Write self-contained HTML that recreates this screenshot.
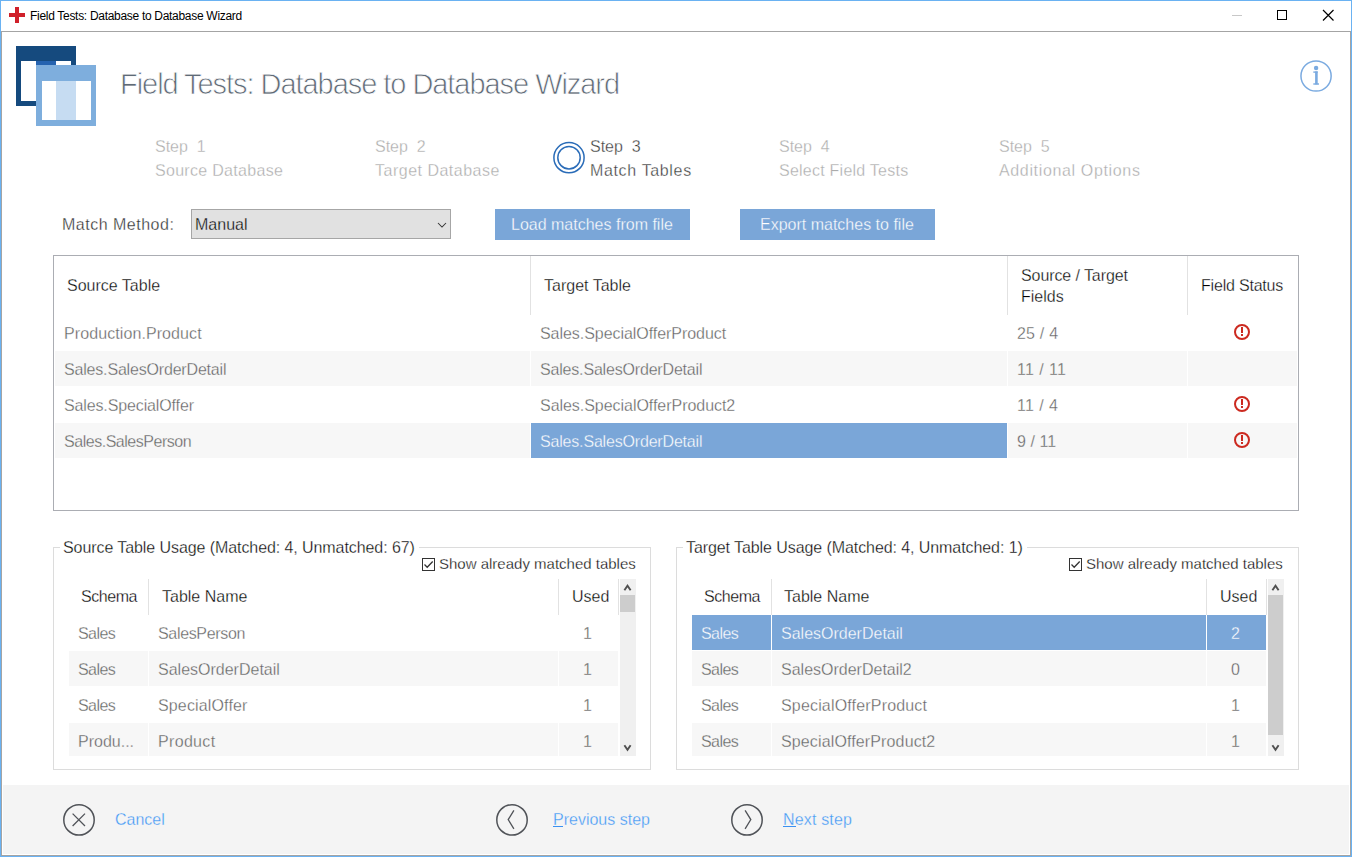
<!DOCTYPE html>
<html><head><meta charset="utf-8">
<style>
*{box-sizing:border-box;margin:0;padding:0}
html,body{width:1352px;height:857px;overflow:hidden;background:#fff;font-family:"Liberation Sans",sans-serif}
.a{position:absolute;white-space:nowrap}
.t16{font-size:16px;line-height:16px;-webkit-text-stroke:0.3px var(--sb,#fff)}
#frame{position:absolute;left:0;top:0;width:1352px;height:857px;border:1px solid #6ab2f2}
.ln{position:absolute;background:#a4a4a4}
#footer{position:absolute;left:3px;top:785px;width:1346px;height:69px;background:#f4f4f4}
.step{color:#ababab}
.hdr{color:#000}
.cell{color:#606060}
.alt{position:absolute;background:#f7f7f7}
.sel{position:absolute;background:#7aa6d8}
.vdiv{position:absolute;width:1px;background:#e2e2e2}
.link{color:#3d96f4;--sb:#f4f4f4}
</style></head><body>
<div id="frame"></div>
<div class="ln" style="left:1px;top:31px;width:1350px;height:1px"></div>
<div class="ln" style="left:1px;top:31px;width:1px;height:825px"></div>
<div class="ln" style="left:1350px;top:31px;width:1px;height:825px"></div>
<div class="ln" style="left:1px;top:855px;width:1350px;height:1px"></div>
<svg class="a" style="left:9px;top:7px" width="16" height="16"><rect x="6" y="0" width="4" height="16" fill="#d0202a"/><rect x="0" y="6" width="16" height="4" fill="#d0202a"/></svg>
<div class="a" style="left:30px;top:10px;font-size:12px;line-height:12px;letter-spacing:-0.3px;color:#000">Field Tests: Database to Database Wizard</div>
<div class="a" style="left:1232px;top:15px;width:10px;height:1px;background:#c8c8c8"></div>
<div class="a" style="left:1277px;top:10px;width:10px;height:10px;border:1px solid #000"></div>
<svg class="a" style="left:1322px;top:9px" width="13" height="13"><path d="M1 1L11.5 11.5M11.5 1L1 11.5" stroke="#000" stroke-width="1.2"/></svg>
<svg class="a" style="left:16px;top:46px" width="81" height="81">
 <rect x="0" y="0" width="60" height="60" fill="#154a7e"/>
 <rect x="5" y="15" width="50" height="40" fill="#fff"/>
 <rect x="20" y="15" width="20" height="5" fill="#2563b0"/>
 <rect x="20" y="19" width="60" height="61" fill="#7eaedd"/>
 <rect x="26" y="35" width="49" height="39" fill="#fff"/>
 <rect x="40" y="35" width="20" height="39" fill="#c6dcf2"/>
</svg>
<div class="a" style="left:120px;top:70px;font-size:29px;line-height:29px;letter-spacing:-1.05px;color:#5f6a76;-webkit-text-stroke:0.75px #fff">Field Tests: Database to Database Wizard</div>
<svg class="a" style="left:1296px;top:56px" width="40" height="40"><g fill="#7aaae0"><circle cx="20.05" cy="20" r="15.1" fill="none" stroke="#7aaae0" stroke-width="1.5"/><circle cx="20.1" cy="12" r="2.2"/><rect x="19.1" y="15.4" width="2.6" height="13"/><rect x="17.3" y="15.4" width="4.4" height="1.4"/><rect x="17.3" y="27.3" width="5.7" height="1.4"/></g></svg>
<div class="a t16 step" style="left:155px;top:139px;">Step&nbsp; 1</div>
<div class="a t16 step" style="left:155px;top:163px;letter-spacing:0.3px">Source Database</div>
<div class="a t16 step" style="left:375px;top:139px;">Step&nbsp; 2</div>
<div class="a t16 step" style="left:375px;top:163px;letter-spacing:0.5px">Target Database</div>
<div class="a t16" style="left:590px;top:139px;color:#3a3a3a;">Step&nbsp; 3</div>
<div class="a t16" style="left:590px;top:163px;color:#3a3a3a;letter-spacing:0.65px">Match Tables</div>
<div class="a t16 step" style="left:779px;top:139px;">Step&nbsp; 4</div>
<div class="a t16 step" style="left:779px;top:163px;letter-spacing:0.24px">Select Field Tests</div>
<div class="a t16 step" style="left:999px;top:139px;">Step&nbsp; 5</div>
<div class="a t16 step" style="left:999px;top:163px;letter-spacing:0.65px">Additional Options</div>
<svg class="a" style="left:551px;top:140px" width="36" height="36"><circle cx="18" cy="17.7" r="15.1" fill="none" stroke="#2a6cb8" stroke-width="1.5"/><circle cx="18" cy="17.7" r="11.2" fill="none" stroke="#2a6cb8" stroke-width="1.5"/></svg>
<div class="a t16" style="left:62px;top:217px;color:#2a2a2a;letter-spacing:0.5px">Match Method:</div>
<div class="a" style="left:191px;top:209px;width:260px;height:30px;background:#e1e1e1;border:1px solid #a6a6a6"></div>
<div class="a t16" style="left:195px;top:217px;color:#000;--sb:#e1e1e1">Manual</div>
<svg class="a" style="left:437px;top:222px" width="10" height="7"><path d="M1 1L5 5L9 1" fill="none" stroke="#333" stroke-width="1.05"/></svg>
<div class="a" style="left:495px;top:209px;width:195px;height:31px;background:#7aa6d8"></div>
<div class="a t16" style="left:511px;top:217px;color:#fff;--sb:#7aa6d8">Load matches from file</div>
<div class="a" style="left:740px;top:209px;width:195px;height:31px;background:#7aa6d8"></div>
<div class="a t16" style="left:760px;top:217px;color:#fff;--sb:#7aa6d8">Export matches to file</div>
<div class="a" style="left:53px;top:255px;width:1246px;height:256px;border:1px solid #abadb3"></div>
<div class="vdiv" style="left:530px;top:256px;height:59px"></div>
<div class="vdiv" style="left:1007px;top:256px;height:59px"></div>
<div class="vdiv" style="left:1187px;top:256px;height:59px"></div>
<div class="a t16 hdr" style="left:67px;top:278px">Source Table</div>
<div class="a t16 hdr" style="left:544px;top:278px">Target Table</div>
<div class="a t16 hdr" style="left:1021px;top:268px;letter-spacing:-0.09px">Source / Target</div>
<div class="a t16 hdr" style="left:1021px;top:289px">Fields</div>
<div class="a t16 hdr" style="left:1201px;top:278px;letter-spacing:-0.2px">Field Status</div>
<div class="a t16 cell" style="left:64px;top:326px;letter-spacing:0.09px;">Production.Product</div>
<div class="a t16 cell" style="left:540px;top:326px;letter-spacing:-0.05px;">Sales.SpecialOfferProduct</div>
<div class="a t16 cell" style="left:1017px;top:326px;letter-spacing:0.2px;">25 / 4</div>
<svg class="a" style="left:1232px;top:322px" width="20" height="20"><circle cx="10" cy="10" r="7" fill="none" stroke="#cc2a20" stroke-width="2"/><rect x="9" y="5" width="2" height="6" fill="#cc2a20"/><rect x="9" y="12" width="2" height="2" fill="#cc2a20"/></svg>
<div class="alt" style="left:55px;top:351px;width:475px;height:35px"></div>
<div class="alt" style="left:531px;top:351px;width:476px;height:35px"></div>
<div class="alt" style="left:1008px;top:351px;width:179px;height:35px"></div>
<div class="alt" style="left:1188px;top:351px;width:109px;height:35px"></div>
<div class="a t16 cell" style="left:64px;top:362px;--sb:#f7f7f7;letter-spacing:-0.18px;">Sales.SalesOrderDetail</div>
<div class="a t16 cell" style="left:540px;top:362px;--sb:#f7f7f7;letter-spacing:-0.18px;">Sales.SalesOrderDetail</div>
<div class="a t16 cell" style="left:1017px;top:362px;--sb:#f7f7f7;letter-spacing:0.4px;">11 / 11</div>
<div class="a t16 cell" style="left:64px;top:398px;letter-spacing:-0.13px;">Sales.SpecialOffer</div>
<div class="a t16 cell" style="left:540px;top:398px;letter-spacing:-0.04px;">Sales.SpecialOfferProduct2</div>
<div class="a t16 cell" style="left:1017px;top:398px;letter-spacing:0.4px;">11 / 4</div>
<svg class="a" style="left:1232px;top:394px" width="20" height="20"><circle cx="10" cy="10" r="7" fill="none" stroke="#cc2a20" stroke-width="2"/><rect x="9" y="5" width="2" height="6" fill="#cc2a20"/><rect x="9" y="12" width="2" height="2" fill="#cc2a20"/></svg>
<div class="alt" style="left:55px;top:423px;width:475px;height:35px"></div>
<div class="sel" style="left:531px;top:423px;width:476px;height:35px"></div>
<div class="alt" style="left:1008px;top:423px;width:179px;height:35px"></div>
<div class="alt" style="left:1188px;top:423px;width:109px;height:35px"></div>
<div class="a t16 cell" style="left:64px;top:434px;--sb:#f7f7f7;letter-spacing:-0.47px;">Sales.SalesPerson</div>
<div class="a t16" style="left:540px;top:434px;color:#fff;--sb:#7aa6d8;letter-spacing:-0.18px;">Sales.SalesOrderDetail</div>
<div class="a t16 cell" style="left:1017px;top:434px;--sb:#f7f7f7;letter-spacing:0.05px;">9 / 11</div>
<svg class="a" style="left:1232px;top:430px" width="20" height="20"><circle cx="10" cy="10" r="7" fill="none" stroke="#cc2a20" stroke-width="2"/><rect x="9" y="5" width="2" height="6" fill="#cc2a20"/><rect x="9" y="12" width="2" height="2" fill="#cc2a20"/></svg>
<div class="a" style="left:53px;top:547px;width:598px;height:223px;border:1px solid #dcdcdc"></div>
<div class="a t16" style="left:60px;top:540px;height:16px;padding:0 4px 0 3px;background:#fff;color:#000;letter-spacing:-0.08px">Source Table Usage (Matched: 4, Unmatched: 67)</div>
<svg class="a" style="left:422px;top:558px" width="13" height="13"><rect x="0.5" y="0.5" width="12" height="12" fill="#fff" stroke="#333"/><path d="M2.5 6.5L5.2 9.2L10.7 3.5" fill="none" stroke="#333" stroke-width="1.3"/></svg>
<div class="a" style="left:439px;top:556px;font-size:15px;line-height:15px;color:#000;-webkit-text-stroke:0.3px #fff">Show already matched tables</div>
<div class="vdiv" style="left:148px;top:579px;height:36px"></div>
<div class="vdiv" style="left:558px;top:579px;height:36px"></div>
<div class="vdiv" style="left:618px;top:579px;height:36px"></div>
<div class="a t16 hdr" style="left:81px;top:589px;letter-spacing:-0.45px">Schema</div>
<div class="a t16 hdr" style="left:162px;top:589px">Table Name</div>
<div class="a t16 hdr" style="left:572px;top:589px">Used</div>
<div class="a t16" style="left:78px;top:626px;color:#606060;letter-spacing:-0.55px;">Sales</div>
<div class="a t16" style="left:158px;top:626px;color:#606060;letter-spacing:-0.33px;">SalesPerson</div>
<div class="a t16" style="left:559px;width:59px;text-align:center;top:626px;color:#606060;padding-right:2px">1</div>
<div class="alt" style="left:69px;top:651px;width:79px;height:35px"></div>
<div class="alt" style="left:149px;top:651px;width:409px;height:35px"></div>
<div class="alt" style="left:559px;top:651px;width:59px;height:35px"></div>
<div class="a t16" style="left:78px;top:662px;color:#606060;--sb:#f7f7f7;letter-spacing:-0.55px;">Sales</div>
<div class="a t16" style="left:158px;top:662px;color:#606060;--sb:#f7f7f7;">SalesOrderDetail</div>
<div class="a t16" style="left:559px;width:59px;text-align:center;top:662px;color:#606060;--sb:#f7f7f7;padding-right:2px">1</div>
<div class="a t16" style="left:78px;top:698px;color:#606060;letter-spacing:-0.55px;">Sales</div>
<div class="a t16" style="left:158px;top:698px;color:#606060;letter-spacing:0.15px;">SpecialOffer</div>
<div class="a t16" style="left:559px;width:59px;text-align:center;top:698px;color:#606060;padding-right:2px">1</div>
<div class="alt" style="left:69px;top:723px;width:79px;height:33px"></div>
<div class="alt" style="left:149px;top:723px;width:409px;height:33px"></div>
<div class="alt" style="left:559px;top:723px;width:59px;height:33px"></div>
<div class="a t16" style="left:78px;top:734px;color:#606060;--sb:#f7f7f7;">Produ...</div>
<div class="a t16" style="left:158px;top:734px;color:#606060;--sb:#f7f7f7;letter-spacing:0.33px;">Product</div>
<div class="a t16" style="left:559px;width:59px;text-align:center;top:734px;color:#606060;--sb:#f7f7f7;padding-right:2px">1</div>
<div class="a" style="left:620px;top:579px;width:16px;height:177px;background:#f0f0f0"></div>
<div class="a" style="left:620px;top:595px;width:15px;height:17px;background:#cdcdcd"></div>
<svg class="a" style="left:623px;top:583px" width="10" height="8"><path d="M1.4 7.2L4.5 2.6L7.6 7.2" fill="none" stroke="#505050" stroke-width="1.9"/></svg>
<svg class="a" style="left:623px;top:744px" width="10" height="8"><path d="M1.4 1.2L4.5 5.8L7.6 1.2" fill="none" stroke="#505050" stroke-width="1.9"/></svg>
<div class="a" style="left:676px;top:547px;width:623px;height:223px;border:1px solid #dcdcdc"></div>
<div class="a t16" style="left:683px;top:540px;height:16px;padding:0 4px 0 3px;background:#fff;color:#000;letter-spacing:-0.08px">Target Table Usage (Matched: 4, Unmatched: 1)</div>
<svg class="a" style="left:1069px;top:558px" width="13" height="13"><rect x="0.5" y="0.5" width="12" height="12" fill="#fff" stroke="#333"/><path d="M2.5 6.5L5.2 9.2L10.7 3.5" fill="none" stroke="#333" stroke-width="1.3"/></svg>
<div class="a" style="left:1086px;top:556px;font-size:15px;line-height:15px;color:#000;-webkit-text-stroke:0.3px #fff">Show already matched tables</div>
<div class="vdiv" style="left:771px;top:579px;height:36px"></div>
<div class="vdiv" style="left:1206px;top:579px;height:36px"></div>
<div class="vdiv" style="left:1266px;top:579px;height:36px"></div>
<div class="a t16 hdr" style="left:704px;top:589px;letter-spacing:-0.45px">Schema</div>
<div class="a t16 hdr" style="left:784px;top:589px">Table Name</div>
<div class="a t16 hdr" style="left:1220px;top:589px">Used</div>
<div class="sel" style="left:692px;top:615px;width:79px;height:35px"></div>
<div class="sel" style="left:772px;top:615px;width:434px;height:35px"></div>
<div class="sel" style="left:1207px;top:615px;width:59px;height:35px"></div>
<div class="a t16" style="left:701px;top:626px;color:#fff;--sb:#7aa6d8;letter-spacing:-0.55px;">Sales</div>
<div class="a t16" style="left:781px;top:626px;color:#fff;--sb:#7aa6d8;">SalesOrderDetail</div>
<div class="a t16" style="left:1207px;width:59px;text-align:center;top:626px;color:#fff;--sb:#7aa6d8;padding-right:2px">2</div>
<div class="alt" style="left:692px;top:651px;width:79px;height:35px"></div>
<div class="alt" style="left:772px;top:651px;width:434px;height:35px"></div>
<div class="alt" style="left:1207px;top:651px;width:59px;height:35px"></div>
<div class="a t16" style="left:701px;top:662px;color:#606060;--sb:#f7f7f7;letter-spacing:-0.55px;">Sales</div>
<div class="a t16" style="left:781px;top:662px;color:#606060;--sb:#f7f7f7;">SalesOrderDetail2</div>
<div class="a t16" style="left:1207px;width:59px;text-align:center;top:662px;color:#606060;--sb:#f7f7f7;padding-right:2px">0</div>
<div class="a t16" style="left:701px;top:698px;color:#606060;letter-spacing:-0.55px;">Sales</div>
<div class="a t16" style="left:781px;top:698px;color:#606060;letter-spacing:0.17px;">SpecialOfferProduct</div>
<div class="a t16" style="left:1207px;width:59px;text-align:center;top:698px;color:#606060;padding-right:2px">1</div>
<div class="alt" style="left:692px;top:723px;width:79px;height:33px"></div>
<div class="alt" style="left:772px;top:723px;width:434px;height:33px"></div>
<div class="alt" style="left:1207px;top:723px;width:59px;height:33px"></div>
<div class="a t16" style="left:701px;top:734px;color:#606060;--sb:#f7f7f7;letter-spacing:-0.55px;">Sales</div>
<div class="a t16" style="left:781px;top:734px;color:#606060;--sb:#f7f7f7;letter-spacing:0.13px;">SpecialOfferProduct2</div>
<div class="a t16" style="left:1207px;width:59px;text-align:center;top:734px;color:#606060;--sb:#f7f7f7;padding-right:2px">1</div>
<div class="a" style="left:1268px;top:579px;width:16px;height:177px;background:#f0f0f0"></div>
<div class="a" style="left:1268px;top:595px;width:15px;height:140px;background:#cdcdcd"></div>
<svg class="a" style="left:1271px;top:583px" width="10" height="8"><path d="M1.4 7.2L4.5 2.6L7.6 7.2" fill="none" stroke="#505050" stroke-width="1.9"/></svg>
<svg class="a" style="left:1271px;top:744px" width="10" height="8"><path d="M1.4 1.2L4.5 5.8L7.6 1.2" fill="none" stroke="#505050" stroke-width="1.9"/></svg>
<div id="footer"></div>
<svg class="a" style="left:61px;top:802px" width="36" height="36"><circle cx="18" cy="17.9" r="15.2" fill="none" stroke="#505358" stroke-width="1.5"/><path d="M11.6 11.6L24 24M24 11.6L11.6 24" stroke="#505358" stroke-width="1.3"/></svg>
<div class="a t16 link" style="left:115px;top:812px">Cancel</div>
<svg class="a" style="left:494px;top:802px" width="36" height="36"><circle cx="18" cy="17.9" r="15.2" fill="none" stroke="#505358" stroke-width="1.5"/><path d="M19.9 8.3L14.2 17.6L19.9 26.8" fill="none" stroke="#505358" stroke-width="1.3"/></svg>
<div class="a t16 link" style="left:553px;top:812px">Previous step</div>
<div class="a" style="left:553px;top:826px;width:10px;height:1px;background:#3a90f2"></div>
<svg class="a" style="left:729px;top:802px" width="36" height="36"><circle cx="18" cy="17.9" r="15.2" fill="none" stroke="#505358" stroke-width="1.5"/><path d="M16.1 8.3L21.8 17.6L16.1 26.8" fill="none" stroke="#505358" stroke-width="1.3"/></svg>
<div class="a t16 link" style="left:783px;top:812px;letter-spacing:0.17px">Next step</div>
<div class="a" style="left:783px;top:826px;width:13px;height:1px;background:#3a90f2"></div>
</body></html>
